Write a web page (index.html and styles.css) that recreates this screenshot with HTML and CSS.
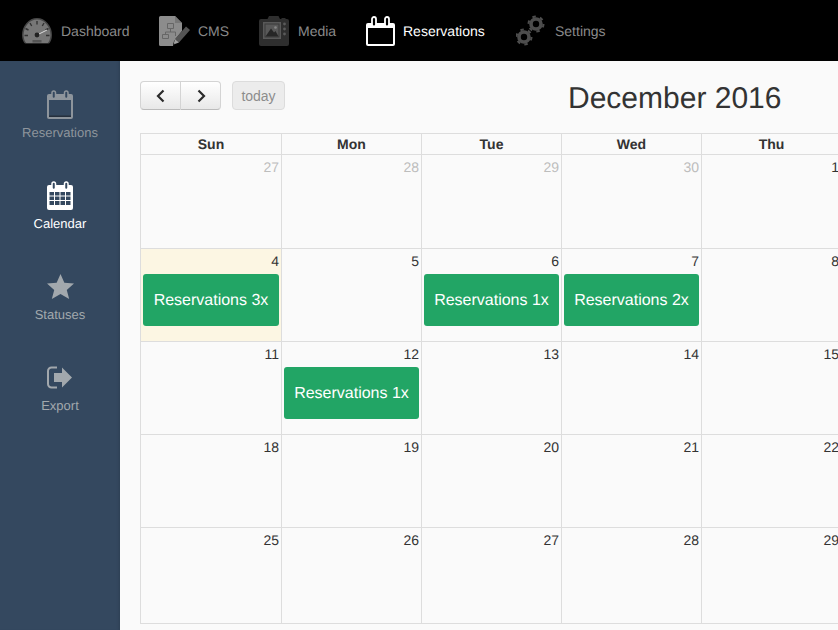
FILE: index.html
```html
<!DOCTYPE html>
<html lang="en">
<head>
<meta charset="utf-8">
<title>Reservations calendar</title>
<link rel="stylesheet" href="styles.css">
</head>
<body>
<header class="topbar">
  <a class="topitem item-dashboard">
    <svg class="topicon" width="30" height="30" viewBox="0 0 30 30"><path fill="#777" stroke="#474747" stroke-width="1.500" d="M4 28C1.800 25.500.800 22.500.800 19 .800 10.500 7 2.800 15 2.800S29.200 10.500 29.200 19c0 3.500-1 6.500-3.200 9z"/><path fill="#000" d="M0 27.500h30V30H0z"/><path stroke="#333" stroke-width="1.400" d="M15 5v3.500M8 7l1.700 3M3.500 12.500l3 1.500M2.500 19.500H6M27.500 19.500H24M26.500 12.500l-3 1.500M22 7l-1.700 3"/><path stroke="#ddd" stroke-width="1" d="M15 19l10-5"/><circle cx="15" cy="19" r="2.400" fill="#222"/><path fill="#555" d="M10.500 24h9v2.500h-9z"/></svg>
    <span>Dashboard</span>
  </a>
  <a class="topitem item-cms">
    <svg class="topicon" width="32" height="30" viewBox="0 0 32 30"><path fill="#8c8c8c" d="M1.500 0H16l7 7v8L15 25l-1 5H1.500A1.500 1.500 0 0 1 0 28.500v-27A1.500 1.500 0 0 1 1.500 0z"/><path fill="#767676" d="M16 0l7 7h-7z"/><path fill="none" stroke="#666" d="M8.500 7.500h6v5h-6zM3.500 18.500h6v4h-6zM11.500 12.500v3.500H6.500v2.500M11.500 16h5v4"/><path fill="#545454" d="M27 10.500l4 3.500-11 12.500-4-3.500z"/><path fill="#a0a0a0" d="M16 23l4 3.500-5.500 2z"/><path fill="#222" d="M14.500 27l1.500 1.300-2 .7z"/></svg>
    <span>CMS</span>
  </a>
  <a class="topitem item-media">
    <svg class="topicon" width="30" height="30" viewBox="0 0 30 30"><path fill="#2e2e2e" d="M2 3h6.500l1.500-3h9.500l1.500 3h1l1-1h3l1 1h1a2 2 0 0 1 2 2v23a2 2 0 0 1-2 2H2a2 2 0 0 1-2-2V5a2 2 0 0 1 2-2z"/><path fill="#595959" d="M4 6h18v17H4z"/><path fill="#3a3a3a" d="M5.500 7.500h15v14h-15z"/><path fill="#666" d="M6.500 8.500h13v12h-13z" opacity=".7"/><path fill="#262626" d="M6.500 20.500l5.500-8 3 4 1.500-1.500 3 5.500z"/><circle cx="16.500" cy="11.500" r="1.300" fill="#888"/><circle cx="25.500" cy="8" r="1.400" fill="#5a5a5a"/><circle cx="25.500" cy="13" r="1.400" fill="#5a5a5a"/><circle cx="25.500" cy="18" r="1.400" fill="#5a5a5a"/></svg>
    <span>Media</span>
  </a>
  <a class="topitem item-reservations active">
    <svg class="topicon" width="29" height="30" viewBox="0 0 29 30"><path fill="#fff" d="M2 7h25a2 2 0 0 1 2 2v19a2 2 0 0 1-2 2H2a2 2 0 0 1-2-2V9a2 2 0 0 1 2-2z"/><path fill="#000" d="M2 12h25v15.500a.5.500 0 0 1-.5.500h-24a.5.500 0 0 1-.5-.500z"/><rect x="6" y="1" width="4" height="9.500" rx="2" fill="#000" stroke="#fff" stroke-width="1.800"/><rect x="19" y="1" width="4" height="9.500" rx="2" fill="#000" stroke="#fff" stroke-width="1.800"/></svg>
    <span>Reservations</span>
  </a>
  <a class="topitem item-settings">
    <svg class="topicon" width="30" height="31" viewBox="0 0 30 31"><g fill="none" stroke="#4d4d4d"><circle cx="20" cy="9" r="5" stroke-width="3.600"/><circle cx="20" cy="9" r="7.500" stroke-width="2" stroke-dasharray="3.500 4.354"/><circle cx="8" cy="22" r="5" stroke-width="3.600"/><circle cx="8" cy="22" r="7.500" stroke-width="2" stroke-dasharray="3.500 4.354"/></g></svg>
    <span>Settings</span>
  </a>
</header>
<div class="layout">
  <nav class="sidebar">
    <a class="sideitem">
      <svg width="26" height="29" viewBox="0 0 26 29"><path fill="#8e959c" d="M2 4h22a2 2 0 0 1 2 2v21a2 2 0 0 1-2 2H2a2 2 0 0 1-2-2V6a2 2 0 0 1 2-2z"/><path fill="#34485f" d="M2 10h22v16H2z"/><path fill="#26303d" d="M2 25.500h22V27H2z"/><rect x="5" y="1" width="3.500" height="7.500" rx="1.750" fill="#34485f" stroke="#8e959c" stroke-width="1.500"/><rect x="17.500" y="1" width="3.500" height="7.500" rx="1.750" fill="#34485f" stroke="#8e959c" stroke-width="1.500"/></svg>
      <span>Reservations</span>
    </a>
    <a class="sideitem active">
      <svg width="26" height="29" viewBox="0 0 26 29"><path fill="#fff" d="M2 4h22a2 2 0 0 1 2 2v21a2 2 0 0 1-2 2H2a2 2 0 0 1-2-2V6a2 2 0 0 1 2-2z"/><path fill="#34485f" d="M2.500 11h4.500v3.500H2.500zM8 11h4.500v3.500H8zM13.500 11H18v3.500h-4.500zM19 11h4.500v3.500H19zM2.500 15.500h4.500V19H2.500zM8 15.500h4.500V19H8zM13.500 15.500H18V19h-4.500zM19 15.500h4.500V19H19zM2.500 20h4.500v4H2.500zM8 20h4.500v4H8zM13.500 20H18v4h-4.500zM19 20h4.500v4H19z"/><rect x="5" y="1" width="3.500" height="7.500" rx="1.750" fill="#34485f" stroke="#fff" stroke-width="1.500"/><rect x="17.500" y="1" width="3.500" height="7.500" rx="1.750" fill="#34485f" stroke="#fff" stroke-width="1.500"/></svg>
      <span>Calendar</span>
    </a>
    <a class="sideitem">
      <svg width="27" height="29" viewBox="0 0 28 26"><path fill="#a2a8ad" d="M14 0l4 9 10 1-7.500 6.500L23 26l-9-5.200L5 26l2.500-9.500L0 10l10-1z"/></svg>
      <span>Statuses</span>
    </a>
    <a class="sideitem">
      <svg width="26" height="22" viewBox="0 0 26 22"><path fill="none" stroke="#a2a8ad" stroke-width="2" d="M10 1H4.500A3.500 3.500 0 0 0 1 4.500v13A3.500 3.500 0 0 0 4.500 21H10"/><path fill="#a2a8ad" d="M7 6.500h8V1l10 10-10 10v-5.500H7z"/></svg>
      <span>Export</span>
    </a>
  </nav>
  <main class="content">
    <div class="toolbar">
      <div class="left-tools">
        <div class="navgroup">
          <button class="navbtn" type="button"><svg width="9" height="14" viewBox="0 0 9 14"><path fill="none" stroke="#2b2b2b" stroke-width="2.200" d="M7.500 1.500L2 7l5.500 5.500"/></svg></button>
          <button class="navbtn" type="button"><svg width="9" height="14" viewBox="0 0 9 14"><path fill="none" stroke="#2b2b2b" stroke-width="2.200" d="M1.500 1.500L7 7l-5.500 5.500"/></svg></button>
        </div>
        <button class="todaybtn" type="button">today</button>
      </div>
      <h1 class="month">December 2016</h1>
    </div>
    <div class="calendar">
      <div class="head">Sun</div><div class="head">Mon</div><div class="head">Tue</div><div class="head">Wed</div><div class="head">Thu</div><div class="head">Fri</div><div class="head">Sat</div>

      <div class="day r1 other">27</div><div class="day r1 other">28</div><div class="day r1 other">29</div><div class="day r1 other">30</div><div class="day r1">1</div><div class="day r1">2</div><div class="day r1">3</div>

      <div class="day r2 today"><span>4</span><a class="event">Reservations 3x</a></div><div class="day r2">5</div><div class="day r2"><span>6</span><a class="event">Reservations 1x</a></div><div class="day r2"><span>7</span><a class="event">Reservations 2x</a></div><div class="day r2">8</div><div class="day r2">9</div><div class="day r2">10</div>

      <div class="day r3">11</div><div class="day r3"><span>12</span><a class="event">Reservations 1x</a></div><div class="day r3">13</div><div class="day r3">14</div><div class="day r3">15</div><div class="day r3">16</div><div class="day r3">17</div>

      <div class="day r4">18</div><div class="day r4">19</div><div class="day r4">20</div><div class="day r4">21</div><div class="day r4">22</div><div class="day r4">23</div><div class="day r4">24</div>

      <div class="day r5">25</div><div class="day r5">26</div><div class="day r5">27</div><div class="day r5">28</div><div class="day r5">29</div><div class="day r5">30</div><div class="day r5">31</div>
    </div>
  </main>
</div>
</body>
</html>
```
FILE: styles.css
```css
* { box-sizing: border-box; }
html, body { margin: 0; height: 100%; overflow: hidden; }
body { font-family: "Liberation Sans", Arial, sans-serif; background: #fafafa; color: #333; text-rendering: geometricPrecision; }

.topbar { height: 61px; background: #000; display: flex; align-items: center; padding-left: 22px; }
.topitem { display: flex; align-items: center; font-size: 14px; color: #8a8a8a; }
.topitem.active { color: #fff; }
.topicon { flex: none; margin-right: 9px; }
.item-dashboard { width: 137px; }
.item-cms { width: 100px; }
.item-cms .topicon { margin-right: 7px; }
.item-media { width: 107px; }
.item-reservations { width: 150px; }
.item-reservations .topicon { margin-right: 8px; }

.layout { display: flex; height: 569px; }
.sidebar { width: 120px; flex: none; background: #34485f; box-shadow: inset -3px 0 3px -2px rgba(0,0,0,.12); display: flex; flex-direction: column; padding-top: 29px; }
.sideitem { height: 91px; display: flex; flex-direction: column; align-items: center; font-size: 13px; color: #8e959c; }
.sideitem svg { height: 29px; flex: none; margin-bottom: 6px; }
.sideitem.active { color: #fff; }
.sideitem:nth-child(3), .sideitem:nth-child(4) { color: #a2a8ad; }

.content { flex: 1; min-width: 0; padding: 20px 0 0 20px; overflow: hidden; }
.toolbar { display: flex; height: 52px; }
.left-tools { display: flex; align-items: flex-start; gap: 11px; width: 428px; flex: none; }
.navgroup { display: flex; }
.navbtn { width: 41px; height: 29px; padding: 0; display: flex; align-items: center; justify-content: center; border: 1px solid #d4d4d4; border-bottom-color: #bbb; background: linear-gradient(#fff, #e8e8e8); border-radius: 4px 0 0 4px; }
.navbtn + .navbtn { border-left: 0; width: 40px; padding-left: 2px; border-radius: 0 4px 4px 0; }
.todaybtn { width: 53px; height: 29px; padding: 0; font: 14px "Liberation Sans", Arial, sans-serif; color: #8c8c8c; background: #ececec; border: 1px solid #dcdcdc; border-radius: 4px; }
.month { margin: 0; padding-top: 1px; font-size: 30px; font-weight: 400; line-height: 33px; color: #333; white-space: nowrap; }

.calendar { display: grid; width: 982px; grid-template-columns: 141px repeat(6, 140px); grid-template-rows: 21px 94px 93px 93px 93px 96px; border-top: 1px solid #ddd; border-left: 1px solid #ddd; }
.head { text-align: center; font-size: 14px; font-weight: 700; line-height: 20px; color: #333; border-right: 1px solid #ddd; border-bottom: 1px solid #ddd; }
.day { padding: 4px 2px 0 0; text-align: right; font-size: 14px; line-height: 16px; color: #333; border-right: 1px solid #ddd; border-bottom: 1px solid #ddd; }
.day.other { color: #bdbdbd; }
.day.today { background: #fcf6e3; }
.day span { display: block; }
.event { display: block; margin: 5px 0 0 2px; height: 52px; line-height: 54px; text-align: center; font-size: 16px; color: #fff; background: #22a565; border-radius: 3px; }
```
